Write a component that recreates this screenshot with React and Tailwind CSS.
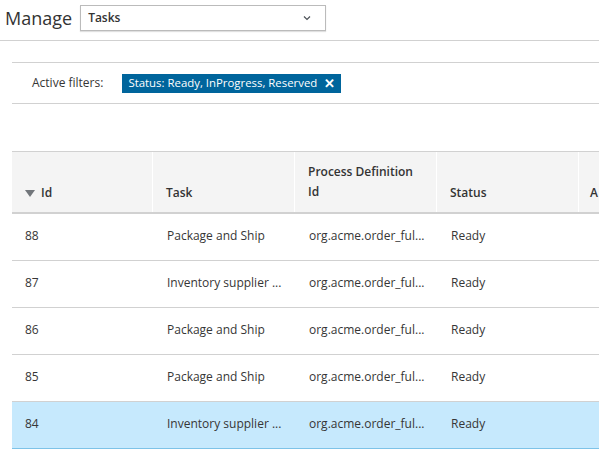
import React from 'react'

const rows = [
  { id: 88, task: 'Package and Ship', def: 'org.acme.order_ful...', status: 'Ready' },
  { id: 87, task: 'Inventory supplier ...', def: 'org.acme.order_ful...', status: 'Ready' },
  { id: 86, task: 'Package and Ship', def: 'org.acme.order_ful...', status: 'Ready' },
  { id: 85, task: 'Package and Ship', def: 'org.acme.order_ful...', status: 'Ready' },
  { id: 84, task: 'Inventory supplier ...', def: 'org.acme.order_ful...', status: 'Ready', selected: true },
]

const App = () => {
  return (
    <div
      className="w-[599px] h-[459px] overflow-hidden bg-white text-[#363636]"
      style={{ fontFamily: '"Open Sans", "Liberation Sans", sans-serif' }}
    >
      {/* Header */}
      <div className="flex items-center h-[41px] border-b border-[#d1d1d1] pl-[5px]">
        <span className="text-[18px] leading-none text-[#333] mr-[8px] -mt-[5px]">Manage</span>
        <div className="flex items-center justify-between w-[246px] h-[26px] -mt-[5px] border border-[#bbb] shadow-[0_1px_1px_rgba(0,0,0,0.12)] bg-white pl-[7px] pr-[14px]">
          <span className="text-[12px] font-semibold text-[#333]">Tasks</span>
          <svg width="8" height="6" viewBox="0 0 8 6">
            <path d="M1 1.5 L4 4.5 L7 1.5" fill="none" stroke="#4d5258" strokeWidth="1.2" />
          </svg>
        </div>
      </div>

      {/* Filters */}
      <div className="ml-[12px] mt-[21px] border-t border-b border-[#d1d1d1] h-[42px] flex items-center">
        <span className="text-[12px] text-[#363636] ml-[20px] mr-[19px]">Active filters:</span>
        <span className="flex items-center h-[19px] bg-[#00659c] text-white text-[11.4px] pl-[6px] pr-[6px]">
          Status: Ready, InProgress, Reserved
          <span className="ml-[7px] text-[13px] font-bold leading-none">✕</span>
        </span>
      </div>

      {/* Table */}
      <div className="ml-[12px] mt-[47px] border-t border-[#d1d1d1]">
        <div className="grid grid-cols-[141px_142px_142px_142px_1fr] bg-[#f4f4f4] h-[62px] border-b-2 border-[#d1d1d1] text-[12px] font-semibold text-[#333]">
          <div className="flex items-end pb-[10px] pl-[13px] border-r border-white">
            <svg width="10" height="7" viewBox="0 0 10 7" className="mr-[6px] mb-[5px]">
              <path d="M0 0 L10 0 L5 7 Z" fill="#72767b" />
            </svg>
            Id
          </div>
          <div className="flex items-end pb-[10px] pl-[13px] border-r border-white">Task</div>
          <div className="flex flex-col justify-end pb-[10px] pl-[13px] border-r border-white leading-[20px]">
            <span>Process Definition</span>
            <span>Id</span>
          </div>
          <div className="flex items-end pb-[10px] pl-[13px] border-r border-white">Status</div>
          <div className="flex items-end pb-[10px] pl-[11px]">A</div>
        </div>
        {rows.map((r) => (
          <div
            key={r.id}
            className={
              r.selected
                ? 'grid grid-cols-[141px_142px_142px_142px_1fr] h-[47px] items-center pb-[3px] text-[12px] bg-[#c6e9fd] border-b border-[#7dc3e8]'
                : 'grid grid-cols-[141px_142px_142px_142px_1fr] h-[47px] items-center pb-[3px] text-[12px] border-b border-[#d1d1d1]'
            }
          >
            <div className="pl-[13px]">{r.id}</div>
            <div className="pl-[14px] whitespace-nowrap">{r.task}</div>
            <div className="pl-[14px] whitespace-nowrap">{r.def}</div>
            <div className="pl-[14px]">{r.status}</div>
            <div />
          </div>
        ))}
      </div>
    </div>
  )
}

export default App
